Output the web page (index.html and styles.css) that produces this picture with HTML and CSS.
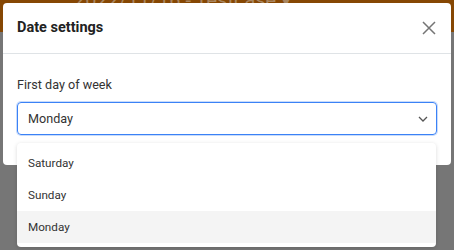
FILE: index.html
```html
<!DOCTYPE html>
<html>
<head>
<title>Date settings</title>
<link rel="stylesheet" href="styles.css">
</head>
<body>
<div class="backdrop">
  <div class="topbar"><span class="crumb">2022/11/16 - Testcase &#9662;</span></div>
</div>

<div class="modal">
  <div class="modal-head">
    <span class="modal-title">Date settings</span>
    <svg class="close" width="14" height="14" viewBox="0 0 14 14"><path d="M1 1L13 13M13 1L1 13" stroke="#757575" stroke-width="1.5" fill="none"/></svg>
  </div>
  <div class="modal-body">
    <div class="field-label">First day of week</div>
    <div class="select">
      <span>Monday</span>
      <svg width="10" height="6" viewBox="0 0 10 6"><path d="M1 1L5 5L9 1" stroke="#555" stroke-width="1.3" fill="none"/></svg>
    </div>
  </div>
</div>

<ul class="menu">
  <li>Saturday</li>
  <li>Sunday</li>
  <li class="active">Monday</li>
</ul>
</body>
</html>
```

FILE: styles.css
```css
html, body
{ margin: 0;
  height: 100%;
}

body
{ background: #767676;
  font-family: Roboto, "Liberation Sans", sans-serif;
  color: #333;
  position: relative;
  overflow: hidden;
}

.backdrop .topbar
{ height: 44px;
  background: #864703;
}

.crumb
{ display: block;
  padding: 0 0 0 74px;
  margin-top: -12px;
  font-size: 20px;
  color: #a98660;
}

/* dialog */

.modal
{ position: absolute;
  left: 3px; top: 3px;
  width: 448px;
  height: 162px;
  background: #fff;
  border-radius: 4px;
}

.modal-head
{ height: 50px;
  display: flex;
  align-items: center;
  justify-content: space-between;
  padding: 0 15px 0 14px;
  border-bottom: 1px solid #dfe3e6;
}

.modal-title
{ font-size: 14.5px;
  font-weight: bold;
  color: #222;
  padding-bottom: 1px;
}

.close
{ margin-bottom: 1px;
}

.modal-body
{ padding: 22px 14px 0 14px;
}

.field-label
{ font-size: 12.6px;
  line-height: 18px;
  margin-bottom: 8px;
}

.select
{ height: 31px;
  border: 1px solid #3b82f6;
  box-shadow: 0 0 0 1px #c9dcfb;
  border-radius: 4px;
  display: flex;
  align-items: center;
  justify-content: space-between;
  padding: 0 8px 0 10px;
  font-size: 12.6px;
}

/* dropdown list */

.menu
{ position: absolute;
  left: 17px; top: 143px;
  width: 419px;
  margin: 0;
  padding: 4px 0;
  list-style: none;
  background: #fff;
  border-radius: 4px;
  box-shadow: 0 1px 4px rgba(0,0,0,0.15);
  font-size: 11.7px;
}

.menu li
{ height: 32px;
  line-height: 32px;
  padding-left: 11px;
}

.menu li.active
{ background: #f4f4f4;
}
```
